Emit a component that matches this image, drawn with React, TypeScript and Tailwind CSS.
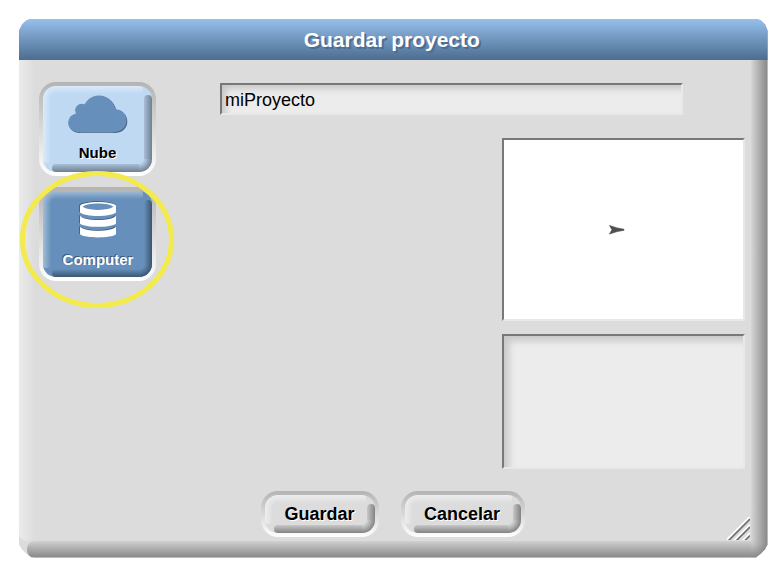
import type { ReactNode } from "react";

type Tone = "cloud" | "selected" | "plain";

const FACE: Record<Tone, string> = {
  cloud: "bg-[#bfd9f3]",
  selected: "bg-[#6690bb]",
  plain: "bg-[#dcdcdc]",
};
const BOTTOM: Record<Tone, string> = {
  cloud: "bg-linear-to-b from-[#a9c0d8] to-[#708091]",
  selected: "bg-linear-to-b from-[#6690bb] to-[#3c5570]",
  plain: "bg-linear-to-b from-[#c8c8c8] to-[#838383]",
};
const RIGHT: Record<Tone, string> = {
  cloud: "bg-linear-to-r from-[#a9c0d8] to-[#708091]",
  selected: "bg-linear-to-r from-[#6690bb] to-[#3c5570]",
  plain: "bg-linear-to-r from-[#c8c8c8] to-[#838383]",
};
const CORNER: Record<Tone, string> = {
  cloud: "bg-[radial-gradient(circle_at_0_0,#bfd9f3_4px,#708091_13px)]",
  selected: "bg-[radial-gradient(circle_at_0_0,#6690bb_5px,#3c5570_13px)]",
  plain: "bg-[radial-gradient(circle_at_0_0,#dcdcdc_4px,#838383_13px)]",
};
const LIGHT: Record<Tone, string> = {
  cloud: "from-white/45",
  selected: "from-white/40",
  plain: "from-white/50",
};
const LIGHT_CORNER: Record<Tone, string> = {
  cloud: "bg-[radial-gradient(circle_at_100%_100%,transparent_5px,rgba(255,255,255,0.45)_13px)]",
  selected: "bg-[radial-gradient(circle_at_100%_100%,transparent_5px,rgba(255,255,255,0.4)_13px)]",
  plain: "bg-[radial-gradient(circle_at_100%_100%,transparent_5px,rgba(255,255,255,0.5)_13px)]",
};

/* The bevel is a 3x3 grid: corners of 13px, edges of 8px between them. */
function Bevel({ tone }: { tone: Tone }) {
  return (
    <span className="absolute inset-0 grid grid-cols-[13px_1fr_13px] grid-rows-[13px_1fr_13px]">
      <span className={LIGHT_CORNER[tone]} />
      <span className={`-mr-1 h-2 rounded-r-[3px] bg-linear-to-b to-transparent ${LIGHT[tone]}`} />
      <span className={`mt-[9px] w-2 justify-self-end rounded-t-[4px] ${RIGHT[tone]}`} />
      <span className={`-mb-1 w-2 rounded-b-[3px] bg-linear-to-r to-transparent ${LIGHT[tone]}`} />
      <span />
      <span className={`w-2 justify-self-end ${RIGHT[tone]}`} />
      <span />
      <span className={`-ml-1 h-2 self-end rounded-l-[4px] ${BOTTOM[tone]}`} />
      <span className={CORNER[tone]} />
    </span>
  );
}

function BevelButton({ tone, size, children }: { tone: Tone; size: string; children: ReactNode }) {
  return (
    <button className={`block shrink-0 rounded-[17px] bg-linear-to-b from-[#b4b4b4] to-white p-1 ${size}`}>
      <span className={`relative flex h-full w-full flex-col items-center overflow-hidden rounded-[13px] ${FACE[tone]}`}>
        <Bevel tone={tone} />
        {children}
      </span>
    </button>
  );
}

function CloudShape() {
  return (
    <>
      <circle cx="9.3" cy="27.7" r="9.2" />
      <circle cx="13.7" cy="15.3" r="6.6" />
      <circle cx="31" cy="17" r="16.4" />
      <circle cx="47.2" cy="25.6" r="11.3" />
      <path d="M9.3 18h38v18.9h-38z" />
    </>
  );
}

function CloudIcon() {
  return (
    <svg className="relative mt-[9px] h-[39px] w-[60px]" viewBox="0 0 60 39">
      <g fill="#48627e" transform="translate(.8 .8)"><CloudShape /></g>
      <g fill="#6690bb"><CloudShape /></g>
    </svg>
  );
}

function DatabaseShape() {
  return (
    <>
      <path
        fillRule="evenodd"
        d="M0 3.8C4-1.2 32-1.2 36 3.8V10.6C31 15.2 5 15.2 0 10.6ZM2.7 4.6C7 9 29 9 33.3 4.6C29 .4 7 .4 2.7 4.6Z"
      />
      <path d="M0 13.7C5 19.5 31 19.5 36 13.7V21.7C31 25.8 5 25.8 0 21.7Z" />
      <path d="M0 24.7C5 30.2 31 30.2 36 24.7V32.3C31 36.5 5 36.5 0 32.3Z" />
    </>
  );
}

function DatabaseIcon() {
  return (
    <svg className="relative mt-[10px] h-[39px] w-[38px]" viewBox="-1 -1 38 39">
      <g fill="#3c5a7b" transform="translate(-.8 -.8)"><DatabaseShape /></g>
      <path d="M2.7 4.6C7 9 29 9 33.3 4.6C29 .4 7 .4 2.7 4.6Z" fill="#6690bb" />
      <g fill="white"><DatabaseShape /></g>
    </svg>
  );
}

function Inset({ size, tone, children }: { size: string; tone: string; children?: ReactNode }) {
  return (
    <div
      className={`flex shrink-0 border-2 border-t-[#787878] border-r-[#e8e8e8] border-b-[#e8e8e8] border-l-[#787878] ${size} ${tone}`}
    >
      {children}
    </div>
  );
}

function ResizeHandle() {
  return (
    <svg className="ml-auto h-[23px] w-[23px] self-end" viewBox="0 0 23 23">
      <g stroke="#ffffff" strokeWidth="1.7">
        <path d="M-1 23.5L23-.5M7 23.5L23 7.5M15.5 23.5L23 16" />
      </g>
      <g stroke="#707070" strokeWidth="1.7">
        <path d="M1.6 23.5L23 2.1M9.5 23.5L23 10M18 23.5L23 18.5" />
      </g>
    </svg>
  );
}

function DialogEdges() {
  return (
    <div className="absolute inset-0 grid grid-cols-[16px_1fr_17px] grid-rows-[1fr_17px]">
      <div className="rounded-b-[8px] bg-linear-to-r from-[#ebebeb] to-[#dcdcdc]" />
      <div />
      <div className="bg-linear-to-r from-[#d6d6d6] to-[#868686]" />
      <div />
      <div className="-ml-2 rounded-l-[8px] bg-linear-to-b from-[#d0d0d0] to-[#868686]" />
      <div className="bg-[radial-gradient(circle_at_0_0,#d3d3d3,#868686_17px)]" />
    </div>
  );
}

export default function App() {
  return (
    <div className="relative h-[574px] w-[784px] overflow-hidden bg-white pt-[18.5px] pl-[19px] font-['Liberation_Sans',Arial,sans-serif] text-black">
      <main className="relative flex h-[539px] w-[748.5px] flex-col overflow-hidden bg-[#dcdcdc] [clip-path:polygon(0_12px,3px_6px,7px_2px,12px_0,737px_0,742px_2px,746px_6px,748.5px_12px,748.5px_526px,746px_531px,742px_535px,737px_539px,12px_539px,7px_535px,3px_531px,0_526px)]">
        <DialogEdges />
        <header className="relative h-[41.5px] shrink-0 bg-linear-to-b from-[#96c0ed] to-[#4d6d90] pr-[3px] text-center text-[21px] leading-[41px] font-bold text-white [text-shadow:2px_2px_0_#4d6d90]">
          Guardar proyecto
        </header>

        <div className="relative flex h-[431px] shrink-0 justify-between pt-[22px] pr-[22.5px] pl-5">
          <nav className="flex flex-col gap-[11px]">
            <BevelButton tone="cloud" size="h-[94px] w-[117px]">
              <CloudIcon />
              <span className="relative mt-[10px] text-[15px] leading-[18px] font-bold [text-shadow:1px_1px_0_white]">Nube</span>
            </BevelButton>
            <BevelButton tone="selected" size="h-[94px] w-[117px]">
              <DatabaseIcon />
              <span className="relative mt-[11px] pl-px text-[15px] leading-[18px] font-bold text-white [text-shadow:-1px_-1px_0_#3c5a7b]">Computer</span>
            </BevelButton>
          </nav>
          <section className="flex w-[525px] flex-col gap-[23px] pt-px">
            <Inset
              size="h-[32px] w-[463px] px-[3px] text-[18px] leading-[31px]"
              tone="bg-[#ececec] shadow-[inset_5px_5px_6px_-1px_#c8c8c8]"
            >
              miProyecto
            </Inset>
            <div className="flex flex-col items-end gap-[13px]">
              <Inset size="h-[183px] w-[243px] items-center justify-center" tone="bg-white">
                <svg className="mt-px mr-[14px] h-[10px] w-[16px]" viewBox="0 0 16 10">
                  <path d="M.5.5L8 2.9L15 4.3V5.3L8 6.6L.5 9L3 4.7Z" fill="#505050" stroke="#404040" strokeWidth=".6" />
                </svg>
              </Inset>
              <Inset size="h-[135px] w-[243px]" tone="bg-[#ececec] shadow-[inset_6px_6px_7px_-1px_#c8c8c8]" />
            </div>
          </section>
        </div>

        <footer className="relative flex h-[49px] gap-[22px] pr-[18px] pl-[242px] text-[18px] leading-[38px] font-bold">
          <BevelButton tone="plain" size="h-[46px] w-[118px]">
            <span className="relative pr-px [text-shadow:1px_1px_0_white]">Guardar</span>
          </BevelButton>
          <BevelButton tone="plain" size="h-[46px] w-[124px]">
            <span className="relative pr-[2px] [text-shadow:1px_1px_0_white]">Cancelar</span>
          </BevelButton>
          <ResizeHandle />
        </footer>
      </main>
      <svg className="pointer-events-none absolute top-[168px] left-[17px]" width="160" height="143" viewBox="0 0 160 143">
        <ellipse cx="80" cy="71.5" rx="74.5" ry="66" fill="none" stroke="#f3ea4b" strokeWidth="5" />
      </svg>
    </div>
  );
}
